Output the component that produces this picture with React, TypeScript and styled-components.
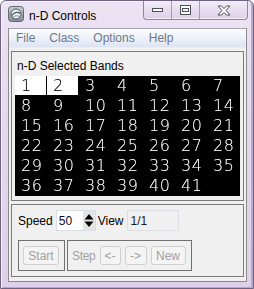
import React from 'react';
import styled, { createGlobalStyle } from 'styled-components';

const GlobalStyle = createGlobalStyle`
  html, body {
    margin: 0;
    padding: 0;
    background: #ffffff;
  }
  body {
    font-family: "Liberation Sans", Arial, sans-serif;
    font-size: 12px;
    -webkit-font-smoothing: antialiased;
  }
`;

const Frame = styled.div`
  width: 254px;
  height: 289px;
  box-sizing: border-box;
  border: 1px solid #6f6384;
  border-radius: 6px 6px 0 0;
  background: linear-gradient(180deg, #ece3f3 0%, #e4d9ef 40%, #ddd0ea 100%);
  padding: 0 6px 6px 7px;
  display: flex;
  flex-direction: column;
  box-shadow: inset 1px 1px 0 #f7f2fb, inset -2px -1px 0 #b7a8cc;
`;

const TitleBar = styled.div`
  height: 29px;
  display: flex;
  align-items: flex-start;
`;

const AppIcon = styled.div`
  width: 16px;
  height: 16px;
  margin-top: 5px;
  display: flex;
`;

const Title = styled.span`
  margin: 8px 0 0 5px;
  font-size: 12px;
  color: #000000;
`;

const CaptionGroup = styled.div`
  margin-left: auto;
  margin-right: -1px;
  height: 18px;
  display: flex;
  border: 1px solid #8f83a3;
  border-top: none;
  border-radius: 0 0 4px 4px;
  background: linear-gradient(180deg, #f3edf8 0%, #e6dcef 55%, #dccfe8 100%);
  box-shadow: inset 0 -1px 0 #f8f4fb;
`;

const CaptionButton = styled.div<{ $w: number; $last?: boolean }>`
  width: ${p => p.$w}px;
  display: flex;
  align-items: center;
  justify-content: center;
  border-right: ${p => (p.$last ? 'none' : '1px solid #a69bb8')};
`;

const Client = styled.div`
  flex: 1;
  border: 1px solid #8a8a8a;
  border-top-color: #a3a3b3;
  display: flex;
  flex-direction: column;
  background: #f0f0f0;
`;

const MenuBar = styled.div`
  height: 18px;
  display: flex;
  align-items: center;
  padding-left: 7px;
  background: linear-gradient(180deg, #fbfcfe 0%, #eef2f8 50%, #dde4f1 100%);
  border-bottom: 1px solid #e8ecf3;
`;

const MenuItem = styled.span`
  color: #6b788b;
  font-size: 12px;
  margin-right: 14px;
`;

const Body = styled.div`
  flex: 1;
  display: flex;
  flex-direction: column;
  gap: 3px;
  padding: 3px 2px 4px 2px;
`;

const GroupBox = styled.div`
  border: 1px solid #7b7b7b;
  display: flex;
  flex-direction: column;
`;

const BandsGroup = styled(GroupBox)`
  height: 150px;
  box-sizing: border-box;
  padding: 0 2px 0 3px;
`;

const GroupLabel = styled.div`
  margin: 7px 0 3px 2px;
  line-height: 14px;
  color: #000000;
  font-size: 12px;
`;

const BandGrid = styled.div`
  width: 225px;
  background: #000000;
  display: grid;
  grid-template-columns: repeat(7, 32px);
  grid-auto-rows: 20px;
  transform: translateZ(0);
  will-change: transform;
`;

const BandCell = styled.div<{ $selected?: boolean }>`
  box-sizing: border-box;
  border-right: 1px solid #000000;
  border-bottom: 1px solid #000000;
  background: ${p => (p.$selected ? '#ffffff' : '#000000')};
  color: ${p => (p.$selected ? '#000000' : '#ffffff')};
  font-family: "DejaVu Sans ExtraLight", "DejaVu Sans", sans-serif;
  font-weight: 200;
  font-size: 16px;
  line-height: 19px;
  padding-left: 6px;
  letter-spacing: 0.5px;
  text-shadow: 0 0 0.5px ${p => (p.$selected ? 'rgba(0,0,0,0.4)' : 'rgba(255,255,255,0.4)')};
`;

const ControlGroup = styled(GroupBox)`
  flex: 1;
  padding: 5px 4px 5px 6px;
`;

const SpeedRow = styled.div`
  display: flex;
  align-items: center;
  height: 21px;
`;

const FieldLabel = styled.span`
  color: #000000;
  font-size: 12px;
`;

const SpinBox = styled.div`
  width: 40px;
  height: 21px;
  box-sizing: border-box;
  margin: 0 2px 0 3px;
  border: 1px solid #d9dde4;
  background: #ffffff;
  display: flex;
  align-items: center;
`;

const SpinValue = styled.span`
  flex: 1;
  padding-left: 2px;
  color: #0a0a2a;
  font-size: 12px;
`;

const SpinArrows = styled.div`
  width: 12px;
  height: 19px;
  background: #e4e4e4;
  display: flex;
  align-items: center;
  justify-content: center;
`;

const ReadOnlyField = styled.div`
  width: 52px;
  height: 21px;
  box-sizing: border-box;
  margin-left: 3px;
  border: 1px solid #dadde2;
  background: #f0f0f0;
  display: flex;
  align-items: center;
  padding-left: 3px;
  color: #1a1a1a;
  font-size: 12px;
`;

const ButtonRow = styled.div`
  display: flex;
  gap: 2px;
  margin-top: 9px;
`;

const ButtonBox = styled.div`
  height: 31px;
  box-sizing: border-box;
  border: 1px solid #6f6f6f;
  display: flex;
  align-items: center;
  gap: 4px;
  padding: 0 5px 0 4px;
`;

const DisabledText = styled.span`
  color: #a3a3a3;
  font-size: 12px;
  letter-spacing: -0.3px;
`;

const DisabledButton = styled.div<{ $w: number }>`
  width: ${p => p.$w}px;
  height: 19px;
  box-sizing: border-box;
  border: 1px solid #cfcfcf;
  border-radius: 3px;
  background: #f4f4f4;
  display: flex;
  align-items: center;
  justify-content: center;
  color: #a0a0a0;
  font-size: 12px;
`;

const bands = Array.from({ length: 41 }, (_, i) => i + 1);
const selected = [1, 2];

const IdlIcon = () => (
  <svg width="16" height="16" viewBox="0 0 16 16">
    <defs>
      <linearGradient id="ig" x1="0" y1="0" x2="0" y2="1">
        <stop offset="0" stopColor="#c9ced3" />
        <stop offset="1" stopColor="#7f8a94" />
      </linearGradient>
    </defs>
    <rect x="0.5" y="0.5" width="15" height="15" rx="3" fill="url(#ig)" stroke="#5d6770" />
    <circle cx="8" cy="8" r="5" fill="#eef1f3" stroke="#4d5760" strokeWidth="1" />
    <path d="M4 9.5 C6 6, 10 5.5, 12 7.5" fill="none" stroke="#4d5760" strokeWidth="1.2" />
    <path d="M5 11 C7 9.5, 10 9.5, 11.5 10.5" fill="none" stroke="#8a949c" strokeWidth="1" />
  </svg>
);

const App: React.FC = () => {
  return (
    <>
      <GlobalStyle />
      <Frame>
        <TitleBar>
          <AppIcon>
            <IdlIcon />
          </AppIcon>
          <Title>n-D Controls</Title>
          <CaptionGroup>
            <CaptionButton $w={27}>
              <svg width="13" height="6" viewBox="0 0 13 6">
                <rect x="1.5" y="1.5" width="10" height="3" fill="#ffffff" stroke="#4f4f5a" />
              </svg>
            </CaptionButton>
            <CaptionButton $w={27}>
              <svg width="13" height="10" viewBox="0 0 13 10">
                <rect x="1.5" y="0.5" width="10" height="9" fill="#ffffff" stroke="#4f4f5a" />
                <rect x="3.5" y="3.5" width="6" height="3" fill="#f4f0f7" stroke="#4f4f5a" />
              </svg>
            </CaptionButton>
            <CaptionButton $w={47} $last>
              <svg width="14" height="11" viewBox="0 0 14 11">
                <path
                  d="M1 1 H4.5 L7 3.6 L9.5 1 H13 L9 5.5 L13 10 H9.5 L7 7.4 L4.5 10 H1 L5 5.5 Z"
                  fill="#ffffff"
                  stroke="#4f4f5a"
                  strokeWidth="1"
                  strokeLinejoin="round"
                />
              </svg>
            </CaptionButton>
          </CaptionGroup>
        </TitleBar>
        <Client>
          <MenuBar>
            <MenuItem>File</MenuItem>
            <MenuItem>Class</MenuItem>
            <MenuItem>Options</MenuItem>
            <MenuItem>Help</MenuItem>
          </MenuBar>
          <Body>
            <BandsGroup>
              <GroupLabel>n-D Selected Bands</GroupLabel>
              <BandGrid>
                {bands.map(b => (
                  <BandCell key={b} $selected={selected.includes(b)}>
                    {b}
                  </BandCell>
                ))}
              </BandGrid>
            </BandsGroup>
            <ControlGroup>
              <SpeedRow>
                <FieldLabel>Speed</FieldLabel>
                <SpinBox>
                  <SpinValue>50</SpinValue>
                  <SpinArrows>
                    <svg width="10" height="15" viewBox="0 0 10 15">
                      <path d="M5 1 L9.5 6.5 H0.5 Z" fill="#000000" />
                      <path d="M0.5 8.5 H9.5 L5 14 Z" fill="#000000" />
                    </svg>
                  </SpinArrows>
                </SpinBox>
                <FieldLabel>View</FieldLabel>
                <ReadOnlyField>1/1</ReadOnlyField>
              </SpeedRow>
              <ButtonRow>
                <ButtonBox>
                  <DisabledButton $w={36}>Start</DisabledButton>
                </ButtonBox>
                <ButtonBox>
                  <DisabledText>Step</DisabledText>
                  <DisabledButton $w={21}>&lt;-</DisabledButton>
                  <DisabledButton $w={22}>-&gt;</DisabledButton>
                  <DisabledButton $w={35}>New</DisabledButton>
                </ButtonBox>
              </ButtonRow>
            </ControlGroup>
          </Body>
        </Client>
      </Frame>
    </>
  );
};

export default App;
